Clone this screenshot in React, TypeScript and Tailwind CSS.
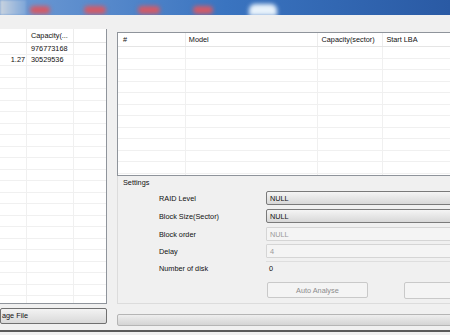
import React from 'react';

const leftRows = [
  ['', '976773168', ''],
  ['1.27', '30529536', ''],
];

function LeftTable() {
  const rows = Array.from({ length: 23 }, (_, i) => leftRows[i] ?? ['', '', '']);
  return (
    <div className="h-[275px] overflow-hidden bg-white border-r border-b border-[#8f949b]">
      <div className="flex h-[14px] border-b border-[#e5e5e5] items-center">
        <div className="w-[27px] h-full border-r border-[#ececec]" />
        <div className="w-[47px] h-full border-r border-[#ececec] pl-[4px] flex items-center">Capacity(...</div>
        <div className="flex-1" />
      </div>
      {rows.map((r, i) => (
        <div key={i} className="flex h-[11.5px] border-b border-[#f0f0f0] items-center">
          <div className="w-[27px] h-full border-r border-[#f0f0f0] pr-[1px] flex items-center justify-end">{r[0]}</div>
          <div className="w-[47px] h-full border-r border-[#f0f0f0] pl-[4px] flex items-center">{r[1]}</div>
          <div className="flex-1" />
        </div>
      ))}
    </div>
  );
}

function DiskTable() {
  const cols = ['w-[69px] pl-[5px]', 'w-[134px] pl-[3px]', 'w-[67px] pl-[4px]', 'w-[80px] pl-[3px]'];
  const heads = ['#', 'Model', 'Capacity(sector)', 'Start LBA'];
  return (
    <div className="h-[144px] overflow-hidden bg-white border-l border-t border-b border-[#8f949b]">
      <div className="flex h-[14px] border-b border-[#e5e5e5]">
        {heads.map((h, i) => (
          <div key={h} className={`${cols[i]} h-full border-r border-[#ececec] flex items-center`}>{h}</div>
        ))}
      </div>
      {Array.from({ length: 12 }).map((_, i) => (
        <div key={i} className="flex h-[11.5px] border-b border-[#f0f0f0]">
          {cols.map((c, j) => (
            <div key={j} className={`${c} h-full border-r border-[#f0f0f0]`} />
          ))}
        </div>
      ))}
    </div>
  );
}

function Combo({ value }: { value: string }) {
  return (
    <div className="h-[14px] border border-[#7a7a7a] rounded-[2px] bg-gradient-to-b from-[#f5f5f5] to-[#d8d8d8] pl-[3px] flex items-center text-[#111]">
      {value}
    </div>
  );
}

function Field({ value }: { value: string }) {
  return (
    <div className="h-[14px] border border-[#d5d5d5] rounded-[1px] bg-[#f4f4f4] pl-[3px] flex items-center text-[#9a9a9a]">
      {value}
    </div>
  );
}

export default function App() {
  const labels = ['RAID Level', 'Block Size(Sector)', 'Block order', 'Delay', 'Number of disk'];
  return (
    <div className="w-[450px] h-[335px] overflow-hidden bg-[#f0f0f0] text-[7.3px] text-[#111] leading-none font-['Liberation_Sans',Arial,sans-serif]">
      {/* title bar */}
      <div className="h-[15px] flex items-center bg-gradient-to-r from-[#6f9bd4] via-[#3a74c0] to-[#2a5aa4] overflow-hidden">
        <div className="w-[26px] h-full bg-gradient-to-r from-[#c9d3df] to-[#7ea6d8] blur-[1px]" />
        <div className="ml-[4px] w-[20px] h-[8px] mt-[5px] bg-[#d45a66] blur-[2px] rounded-full" />
        <div className="ml-[34px] w-[22px] h-[8px] mt-[5px] bg-[#d45a66] blur-[2px] rounded-full" />
        <div className="ml-[32px] w-[22px] h-[8px] mt-[5px] bg-[#d45a66] blur-[2px] rounded-full" />
        <div className="ml-[33px] w-[20px] h-[8px] mt-[5px] bg-[#d45a66] blur-[2px] rounded-full" />
        <div className="ml-[36px] w-[28px] h-[12px] mt-[4px] bg-[#e8f2fb] blur-[2px] rounded-t-md" />
      </div>

      <div className="flex">
        {/* left column */}
        <div className="w-[107px] shrink-0 flex flex-col pt-[14px]">
          <LeftTable />
          <div className="mt-[4px] h-[16px] border border-[#707070] rounded-[2px] bg-gradient-to-b from-[#f3f3f3] to-[#d9d9d9] pl-[1px] flex items-center">
            age File
          </div>
        </div>

        {/* right column */}
        <div className="ml-[10px] w-[345px] shrink-0 flex flex-col pt-[17px]">
          <DiskTable />
          <div className="h-[128px] border-l border-b border-[#dcdcdc] flex flex-col">
            <div className="pl-[5px] mt-[3px]">Settings</div>
            <div className="flex flex-col pl-[41px] mt-[5px]">
              {labels.map((l, i) => (
                <div key={l} className={`flex items-center h-[14px] ${i === 0 ? '' : i < 3 ? 'mt-[4px]' : 'mt-[3px]'}`}>
                  <div className="w-[107px]">{l}</div>
                  <div className="flex-1">
                    {i < 2 && <Combo value="NULL" />}
                    {i === 2 && <Field value="NULL" />}
                    {i === 3 && <Field value="4" />}
                    {i === 4 && (
                      <div className="h-[14px] border-t border-[#dedede] pl-[3px] flex items-center">0</div>
                    )}
                  </div>
                </div>
              ))}
              <div className="flex mt-[7px] pl-[108px]">
                <div className="w-[104px] h-[16px] border border-[#c9c9c9] rounded-[2px] bg-[#f4f4f4] text-[#8c8c8c] flex items-center justify-center">
                  Auto Analyse
                </div>
                <div className="ml-[36px] w-[60px] h-[17px] border border-[#c9c9c9] rounded-[2px] bg-[#f4f4f4]" />
              </div>
            </div>
          </div>
          <div className="mt-[10px] h-[12px] border border-[#b5b5b5] rounded-[2px] bg-gradient-to-b from-[#eeeeee] to-[#d4d4d4]" />
        </div>
      </div>
      <div className="mt-[4px] h-[2px] bg-[#5a5a5a]" />
    </div>
  );
}
